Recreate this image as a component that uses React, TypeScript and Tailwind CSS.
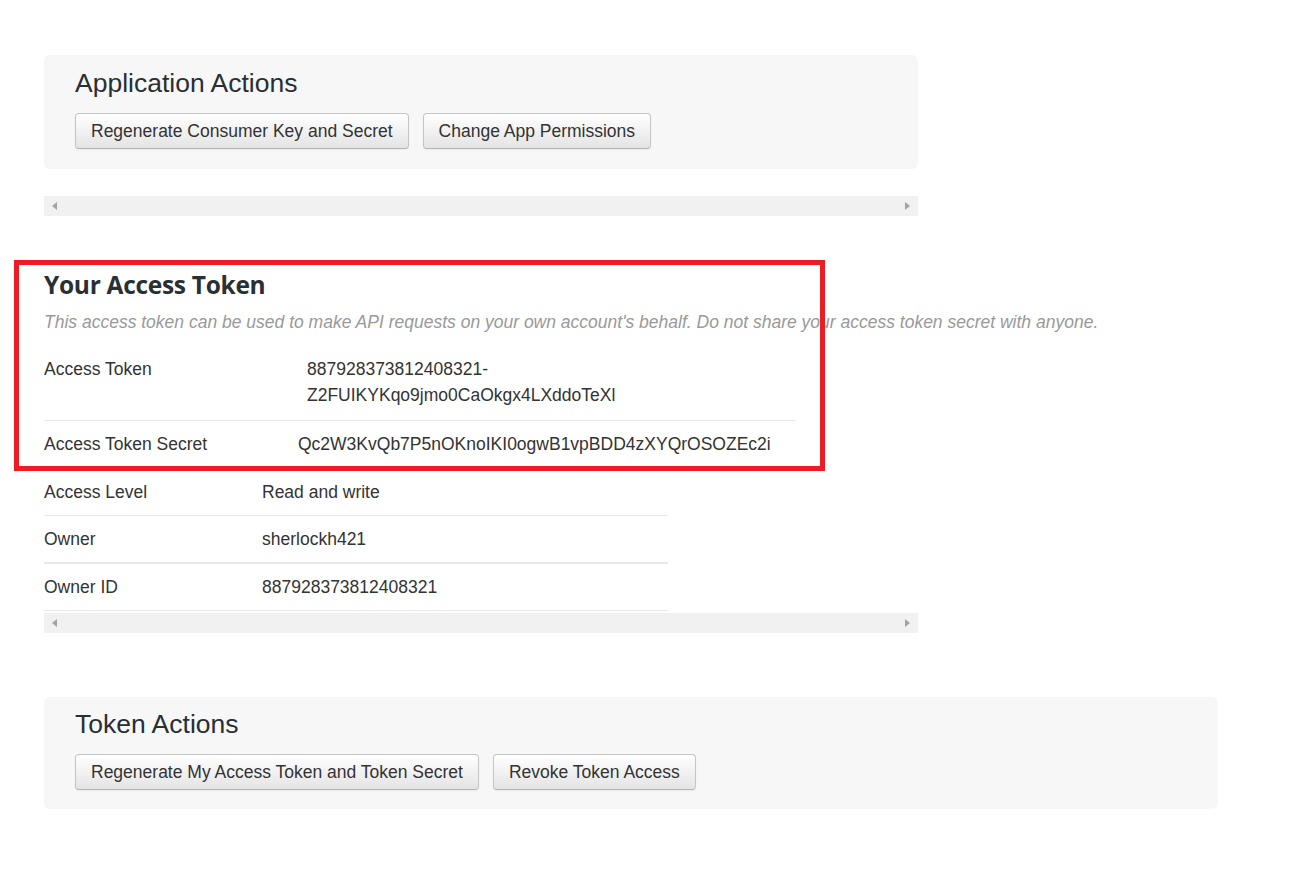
import React from "react";

const Btn = ({ children }: { children: React.ReactNode }) => (
  <button className="h-[36px] px-[15px] rounded-[4px] border border-[#c5c5c5] border-b-[#b3b3b3] bg-gradient-to-b from-[#ffffff] to-[#e4e4e4] text-[17.5px] leading-[20px] text-[#333] shadow-[0_1px_2px_rgba(0,0,0,0.05)] whitespace-nowrap">
    {children}
  </button>
);

const ScrollBar = () => (
  <div className="w-[874px] h-[20px] bg-[#f1f1f1] flex items-center justify-between px-[8px]">
    <svg width="5" height="8" viewBox="0 0 5 8">
      <path d="M5 0 L0 4 L5 8 Z" fill="#a3a3a3" />
    </svg>
    <svg width="5" height="8" viewBox="0 0 5 8">
      <path d="M0 0 L5 4 L0 8 Z" fill="#a3a3a3" />
    </svg>
  </div>
);

export default function App() {
  return (
    <div className="min-h-screen bg-white pl-[44px] pt-[55px] pb-[60px] text-[#333] font-['Liberation_Sans',Arial,sans-serif]">
      {/* app actions */}
      <div className="w-[874px] bg-[#f7f7f7] rounded-[6px] pl-[31px] pt-[14px] pb-[20px]">
        <h2 className="text-[26.5px] leading-[28px] text-[#292f33]">Application Actions</h2>
        <div className="flex gap-[14px] mt-[16px]">
          <Btn>Regenerate Consumer Key and Secret</Btn>
          <Btn>Change App Permissions</Btn>
        </div>
      </div>

      <div className="mt-[27px]">
        <ScrollBar />
      </div>

      {/* access token */}
      <div className="relative mt-[54px]">
        <h3 className="font-['Open_Sans',sans-serif] font-bold text-[24.5px] leading-[30px] text-[#292f33] tracking-[-0.3px]">
          Your Access Token
        </h3>
        <p className="mt-[10px] italic text-[17.5px] leading-[24px] text-[#999] whitespace-nowrap">
          This access token can be used to make API requests on your own account's behalf. Do not share your access token secret with anyone.
        </p>
        <div className="mt-[12px] w-[752px] text-[17.5px] leading-[26px]">
          <div className="flex pt-[10px] pb-[12px] border-b border-[#e8e8e8]">
            <div className="w-[263px] shrink-0">Access Token</div>
            <div>
              887928373812408321-
              <br />
              Z2FUIKYKqo9jmo0CaOkgx4LXddoTeXl
            </div>
          </div>
          <div className="flex pt-[10px] pb-[12px]">
            <div className="w-[254px] shrink-0">Access Token Secret</div>
            <div className="whitespace-nowrap">Qc2W3KvQb7P5nOKnoIKI0ogwB1vpBDD4zXYQrOSOZEc2i</div>
          </div>
        </div>
        <div className="absolute left-[-30px] top-[-10px] w-[811px] h-[211px] border-[5px] border-[#ed1c24] pointer-events-none" />
      </div>

      <div className="w-[624px] text-[17.5px] leading-[26px]">
        <div className="flex py-[10px] border-b border-[#e8e8e8]">
          <div className="w-[218px] shrink-0">Access Level</div>
          <div>Read and write</div>
        </div>
        <div className="flex py-[10px] border-b-2 border-[#e8e8e8]">
          <div className="w-[218px] shrink-0">Owner</div>
          <div>sherlockh421</div>
        </div>
        <div className="flex py-[10px] border-b border-[#e8e8e8]">
          <div className="w-[218px] shrink-0">Owner ID</div>
          <div>887928373812408321</div>
        </div>
      </div>

      <div className="mt-[2px]">
        <ScrollBar />
      </div>

      {/* token actions */}
      <div className="mt-[64px] w-[1174px] bg-[#f7f7f7] rounded-[6px] pl-[31px] pt-[13px] pb-[19px]">
        <h2 className="text-[26.5px] leading-[28px] text-[#292f33]">Token Actions</h2>
        <div className="flex gap-[14px] mt-[16px]">
          <Btn>Regenerate My Access Token and Token Secret</Btn>
          <Btn>Revoke Token Access</Btn>
        </div>
      </div>
    </div>
  );
}
